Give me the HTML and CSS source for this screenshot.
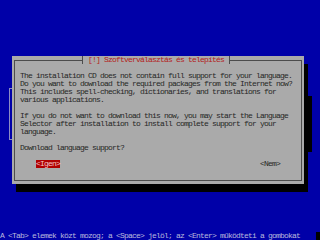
FILE: index.html
```html
<!DOCTYPE html>
<html>
	<head>
		<meta charset="utf-8">
		<link rel="stylesheet" href="styles.css">
		<title>Szoftverválasztás és telepítés</title>
	</head>
	<body>
		<div class="screen">
			<!-- leftovers of the previous screen, not redrawn -->
			<div class="stale-bracket"></div>
			<div class="stale-shadow"></div>

			<div class="dialog">
				<div class="frame">
					<div class="title">[!] Szoftverválasztás és telepítés</div>

					<div class="message">
						<p>The installation CD does not contain full support for your language.<br>Do you want to download the required packages from the Internet now?<br>This includes spell-checking, dictionaries, and translations for<br>various applications.</p>
						<p>If you do not want to download this now, you may start the Language<br>Selector after installation to install complete support for your<br>language.</p>
						<p>Download language support?</p>
					</div>

					<div class="buttons">
						<span class="button active">&lt;Igen&gt;</span>
						<span class="button">&lt;Nem&gt;</span>
					</div>
				</div>
			</div>

			<div class="helpline">
				<span>A &lt;Tab&gt; elemek közt mozog; a &lt;Space&gt; jelöl; az &lt;Enter&gt; működteti a gombokat</span>
				<span class="cursor"></span>
			</div>
		</div>
	</body>
</html>
```

FILE: styles.css
```css
html, body {
  margin: 0;
  padding: 0;
  background: #0000a8;
}

/* 80x30 text grid, every cell is 4x8 px */
.screen {
  position: relative;
  width: 320px;
  height: 240px;
  display: flex;
  flex-direction: column;
  font-family: "Liberation Mono", "DejaVu Sans Mono", monospace;
  font-size: 8px;
  letter-spacing: -0.8px;
  line-height: 8px;
  white-space: nowrap;
}

.stale-bracket {
  position: absolute;
  left: 9px;
  top: 88px;
  width: 3px;
  height: 52px;
  box-sizing: border-box;
  border: 1px solid #8c8cc4;
  border-right: none;
}

.stale-shadow {
  position: absolute;
  left: 308px;
  top: 96px;
  width: 4px;
  height: 56px;
  background: #000;
}

.dialog {
  margin: 56px 0 0 12px;
  width: 292px;
  height: 128px;
  box-sizing: border-box;
  padding: 4px 2px 3px 2px;
  background: #aaaaaa;
  color: #262626;
  box-shadow: 4px 8px 0 #000;
}

.frame {
  height: 121px;
  box-sizing: border-box;
  border: 1px solid #4c4c4c;
  display: flex;
  flex-direction: column;
}

/* title sits on the top rule, the side borders are the tees */
.title {
  align-self: flex-start;
  margin: -5px 0 0 67px;
  height: 8px;
  padding: 0 5px;
  background: #aaaaaa;
  border-left: 1px solid #4c4c4c;
  border-right: 1px solid #4c4c4c;
  color: #b42020;
}

.message {
  margin-top: 8px;
  padding-left: 5px;
}

.message p {
  margin: 0 0 8px 0;
}

.buttons {
  display: flex;
  justify-content: space-between;
  padding: 0 21px;
}

.button {
  height: 8px;
}

.button.active {
  background: #b00000;
  color: #f2c4c4;
}

.helpline {
  margin-top: auto;
  height: 8px;
  display: flex;
  color: #b8b8dc;
}

.cursor {
  margin-left: auto;
  width: 4px;
  height: 8px;
  background: #000;
}
```
